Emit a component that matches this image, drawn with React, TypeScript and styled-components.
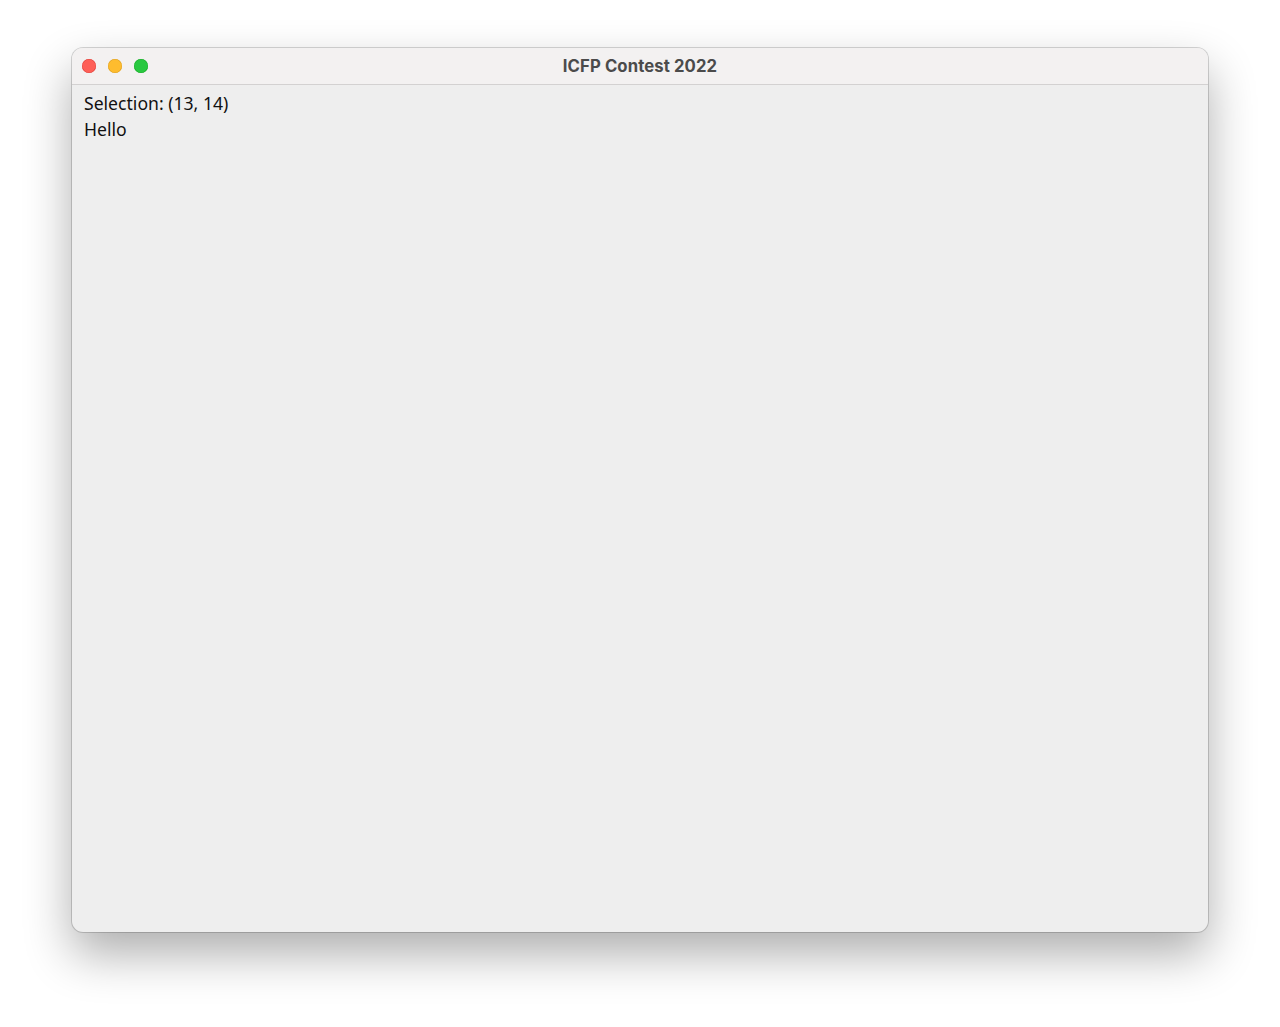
import React from "react";
import styled, { createGlobalStyle } from "styled-components";

const GlobalStyle = createGlobalStyle`
  html, body {
    margin: 0;
    padding: 0;
    background: #ffffff;
  }
  body {
    font-family: "Noto Sans", "Liberation Sans", sans-serif;
  }
`;

const Desktop = styled.div`
  width: 1280px;
  height: 1027px;
  padding: 48px 72px 95px;
  box-sizing: border-box;
  display: flex;
`;

const Window = styled.div`
  flex: 1;
  display: flex;
  flex-direction: column;
  background: #eeeeee;
  border-radius: 11px;
  overflow: hidden;
  box-shadow: 0 0 0 1px rgba(0, 0, 0, 0.16), 0 22px 48px rgba(0, 0, 0, 0.32);
`;

const TitleBar = styled.div`
  position: relative;
  height: 36px;
  flex: none;
  display: flex;
  align-items: center;
  justify-content: center;
  background: #f3f1f1;
  border-bottom: 1px solid #d3d1d1;
`;

const Lights = styled.div`
  position: absolute;
  left: 10px;
  top: 11px;
  display: flex;
  gap: 12px;
`;

type LightProps = {
  $fill: string;
  $ring: string;
};

const Light = styled.div<LightProps>`
  width: 14px;
  height: 14px;
  border-radius: 50%;
  background: ${(p) => p.$fill};
  box-shadow: inset 0 0 0 0.5px ${(p) => p.$ring};
`;

const Title = styled.div`
  font-family: "Inter", "Liberation Sans", sans-serif;
  font-weight: 700;
  font-size: 16.7px;
  color: #4b4b4b;
  letter-spacing: 0.1px;
`;

const Content = styled.div`
  flex: 1;
  padding: 5px 12px;
  display: flex;
  flex-direction: column;
`;

const Line = styled.div`
  font-family: "Noto Sans", "Liberation Sans", sans-serif;
  font-size: 17.6px;
  line-height: 26px;
  color: #111111;
`;

const App = () => {
  return (
    <>
      <GlobalStyle />
      <Desktop>
        <Window>
          <TitleBar>
            <Lights>
              <Light $fill="#fe5f57" $ring="#e0443e" />
              <Light $fill="#febc2e" $ring="#dea123" />
              <Light $fill="#28c840" $ring="#1aab29" />
            </Lights>
            <Title>ICFP Contest 2022</Title>
          </TitleBar>
          <Content>
            <Line>Selection: (13, 14)</Line>
            <Line>Hello</Line>
          </Content>
        </Window>
      </Desktop>
    </>
  );
};

export default App;
